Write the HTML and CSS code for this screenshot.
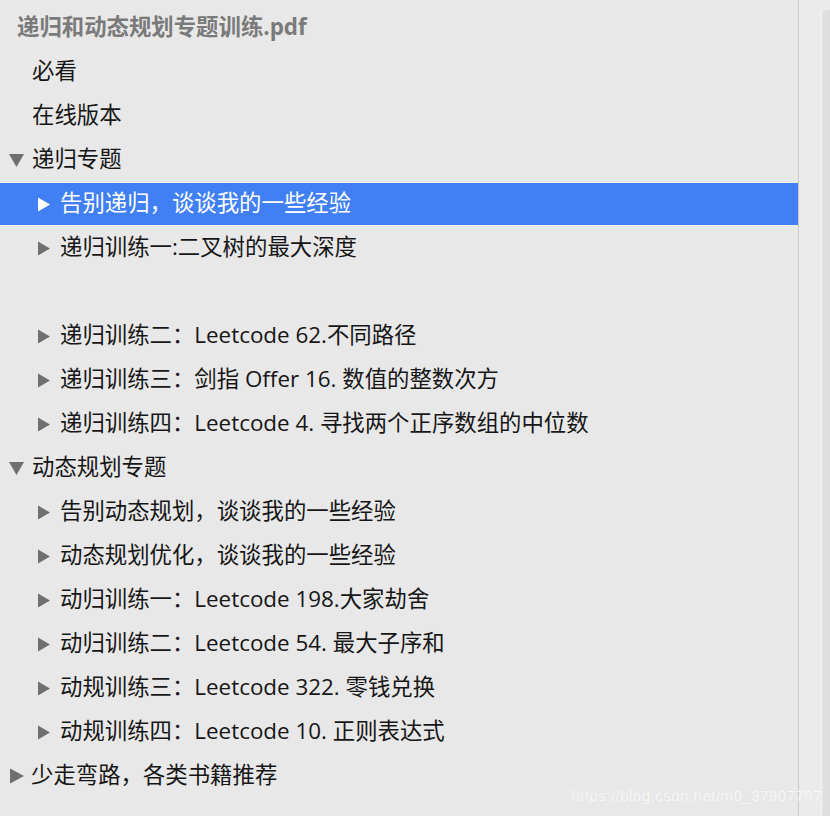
FILE: index.html
```html
<!DOCTYPE html>
<html lang="zh-CN">
<head>
<meta charset="utf-8">
<title>递归和动态规划专题训练.pdf</title>
<link rel="stylesheet" href="styles.css">
</head>
<body>
<div class="window">
  <aside class="sidebar">
    <div class="row title">递归和动态规划专题训练.pdf</div>
    <div class="row leaf">必看</div>
    <div class="row leaf">在线版本</div>
    <div class="row l0"><svg class="tri down" viewBox="0 0 15 13"><polygon points="0,0 15,0 7.5,13"/></svg><span>递归专题</span></div>
    <div class="row l1 selected"><svg class="tri right" viewBox="0 0 12 14"><polygon points="0,0 12,7 0,14"/></svg><span>告别递归，谈谈我的一些经验</span></div>
    <div class="row l1"><svg class="tri right" viewBox="0 0 12 14"><polygon points="0,0 12,7 0,14"/></svg><span>递归训练一:二叉树的最大深度</span></div>
    <div class="row empty"></div>
    <div class="row l1"><svg class="tri right" viewBox="0 0 12 14"><polygon points="0,0 12,7 0,14"/></svg><span>递归训练二：Leetcode 62.不同路径</span></div>
    <div class="row l1"><svg class="tri right" viewBox="0 0 12 14"><polygon points="0,0 12,7 0,14"/></svg><span>递归训练三：剑指 Offer 16. 数值的整数次方</span></div>
    <div class="row l1"><svg class="tri right" viewBox="0 0 12 14"><polygon points="0,0 12,7 0,14"/></svg><span>递归训练四：Leetcode 4. 寻找两个正序数组的中位数</span></div>
    <div class="row l0"><svg class="tri down" viewBox="0 0 15 13"><polygon points="0,0 15,0 7.5,13"/></svg><span>动态规划专题</span></div>
    <div class="row l1"><svg class="tri right" viewBox="0 0 12 14"><polygon points="0,0 12,7 0,14"/></svg><span>告别动态规划，谈谈我的一些经验</span></div>
    <div class="row l1"><svg class="tri right" viewBox="0 0 12 14"><polygon points="0,0 12,7 0,14"/></svg><span>动态规划优化，谈谈我的一些经验</span></div>
    <div class="row l1"><svg class="tri right" viewBox="0 0 12 14"><polygon points="0,0 12,7 0,14"/></svg><span>动归训练一：Leetcode 198.大家劫舍</span></div>
    <div class="row l1"><svg class="tri right" viewBox="0 0 12 14"><polygon points="0,0 12,7 0,14"/></svg><span>动归训练二：Leetcode 54. 最大子序和</span></div>
    <div class="row l1"><svg class="tri right" viewBox="0 0 12 14"><polygon points="0,0 12,7 0,14"/></svg><span>动规训练三：Leetcode 322. 零钱兑换</span></div>
    <div class="row l1"><svg class="tri right" viewBox="0 0 12 14"><polygon points="0,0 12,7 0,14"/></svg><span>动规训练四：Leetcode 10. 正则表达式</span></div>
    <div class="row l0"><svg class="tri right0" viewBox="0 0 14 15"><polygon points="0,0 14,7.5 0,15"/></svg><span>少走弯路，各类书籍推荐</span></div>
  </aside>
  <div class="divider"></div>
  <div class="gutter"><div class="gutter-edge"></div></div>
  <div class="watermark">https://blog.csdn.net/m0_37907797</div>
</div>
</body>
</html>
```

FILE: styles.css
```css
html, body {
  margin: 0;
  padding: 0;
  background: #e8e8e8;
}

.window {
  position: relative;
  display: flex;
  width: 830px;
  height: 816px;
  overflow: hidden;
  font-family: "Open Sans", "Noto Sans CJK SC", sans-serif;
  font-size: 22.4px;
  color: #161616;
}

.sidebar {
  width: 798px;
  flex: none;
  background: #e8e8e8;
  padding-top: 6px;
  box-sizing: border-box;
}

.row {
  height: 44px;
  display: flex;
  align-items: center;
  white-space: nowrap;
  box-sizing: border-box;
}

.row span,
.title,
.leaf {
  line-height: 1;
}

.row span {
  padding-bottom: 2px;
}

.title,
.leaf {
  padding-bottom: 2px;
}

.title {
  padding-left: 17px;
  color: #7a7a7a;
  font-weight: 700;
}

.leaf {
  padding-left: 32px;
}

.l0 {
  padding-left: 9px;
  gap: 8px;
}

.l1 {
  padding-left: 38px;
  gap: 10px;
}

.tri {
  flex: none;
  fill: #6f6f6f;
}

.tri.down {
  width: 15px;
  height: 13px;
}

.tri.right {
  width: 12px;
  height: 15px;
}

.tri.right0 {
  width: 14px;
  height: 16px;
  margin-left: 1px;
  margin-right: -1px;
}

.selected {
  background: #4080f4;
  color: #ffffff;
  height: 42px;
  margin: 1px 0;
  box-shadow: 0 -1px 0 #f2eee6, 0 1px 0 #f2eee6;
}

.selected .tri {
  fill: #ffffff;
}

.divider {
  width: 1px;
  flex: none;
  background: #cbcbcb;
}

.gutter {
  flex: 1;
  display: flex;
  justify-content: flex-end;
  background: #ebebeb;
}

.gutter-edge {
  width: 8px;
  background: linear-gradient(to right, #e2e2e2, #dcdcdc);
  border-left: 1px solid #f4f4f4;
  margin-top: 10px;
}

.watermark {
  position: absolute;
  right: 8px;
  bottom: 12px;
  font-family: "Liberation Sans", sans-serif;
  font-size: 15px;
  letter-spacing: 0.5px;
  color: rgba(255, 255, 255, 0.8);
  text-shadow: 0 0 1px rgba(0, 0, 0, 0.06);
}
```
